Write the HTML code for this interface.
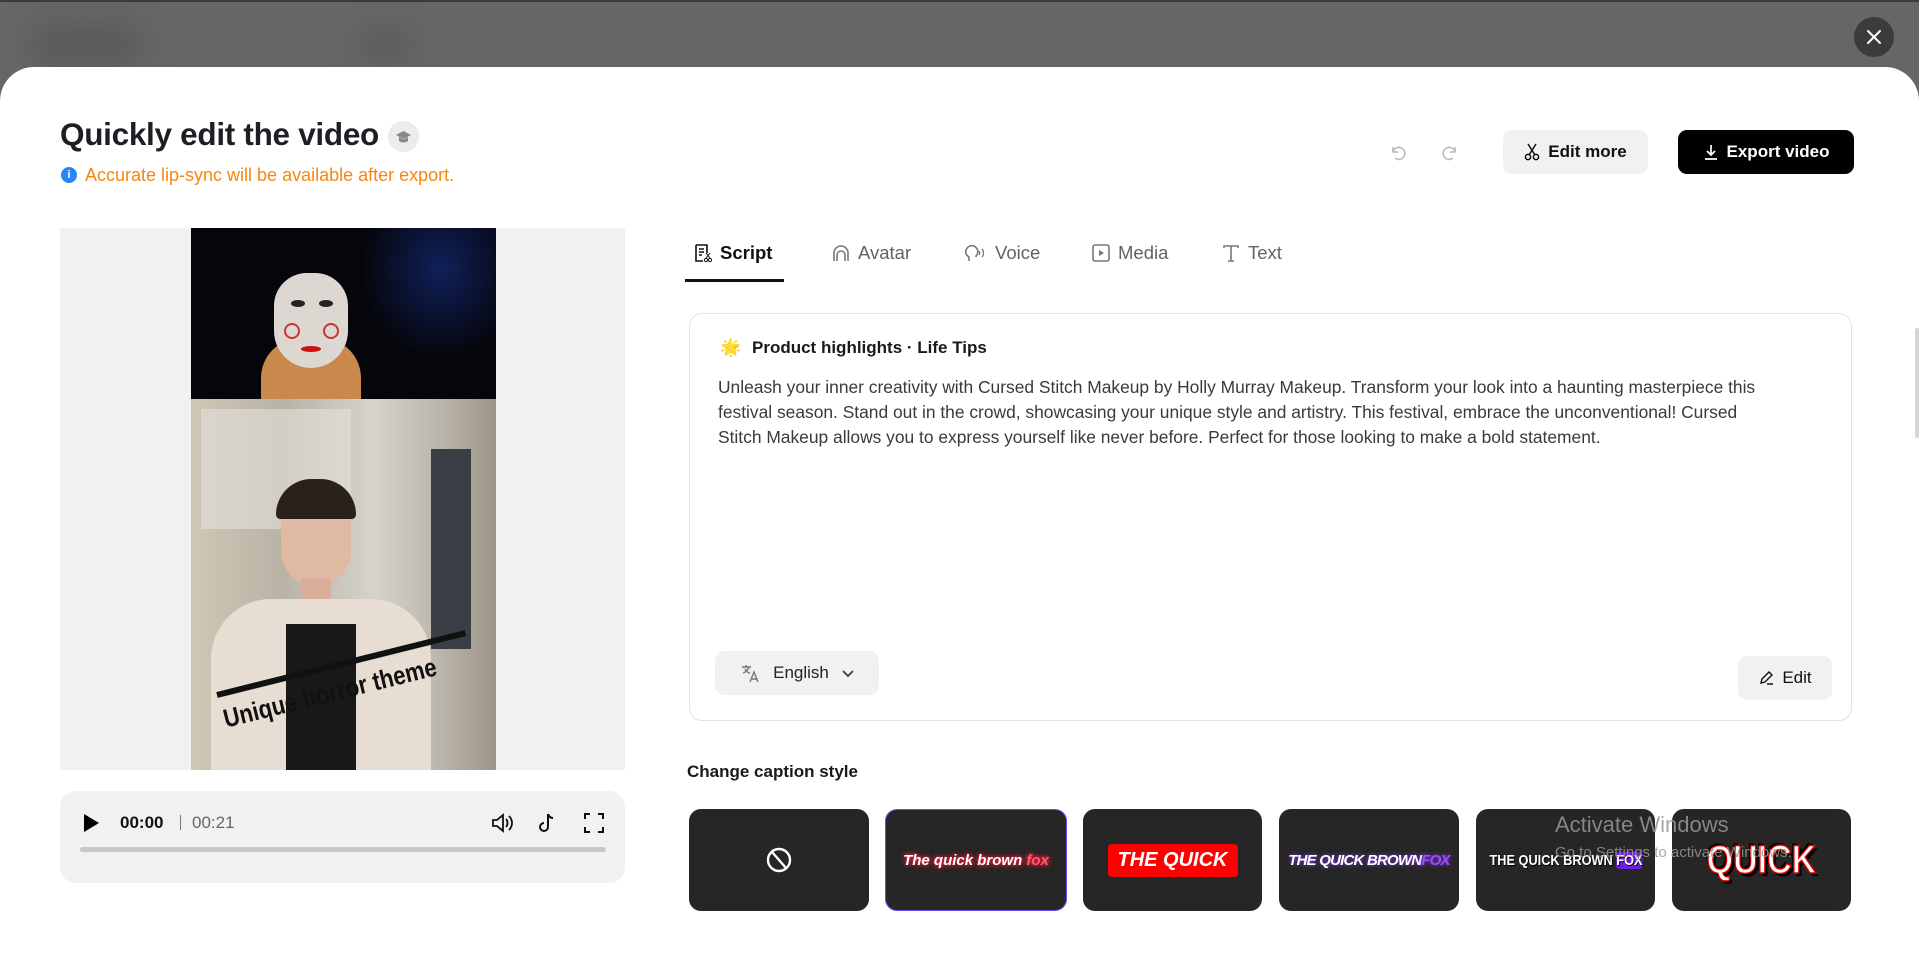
<!DOCTYPE html>
<html><head><meta charset="utf-8"><style>
*{margin:0;padding:0;box-sizing:border-box}
body{width:1919px;height:911px;overflow:hidden;background:#666;font-family:"Liberation Sans",Arial,sans-serif;position:relative;color:#1f1f1f}
.abs{position:absolute}
.topline{left:0;top:0;width:1919px;height:2px;background:#3c3c3c}
.close{left:1854px;top:17px;width:40px;height:40px;border-radius:50%;background:#3b3b3b}
.modal{left:0;top:67px;width:1919px;height:900px;background:#fff;border-radius:34px 34px 0 0}
.title{left:60px;top:116px;font-size:31.5px;font-weight:bold;color:#1c1f23;letter-spacing:-0.3px}
.cap{left:388px;top:121px;width:31px;height:31px;border-radius:50%;background:#ececec}
.info{left:61px;top:165px;font-size:18px;color:#f5870f}
.infoi{left:61px;top:167px;width:16px;height:16px;border-radius:50%;background:#2b86f5;color:#fff;font-size:11px;font-weight:bold;text-align:center;line-height:16px}
.btn{border-radius:9px;font-size:17px;font-weight:bold;display:flex;align-items:center;justify-content:center;gap:8px;white-space:nowrap}
.tab{top:242px;font-size:18.5px;color:#606366;display:flex;align-items:center;gap:7px}
.card{left:689px;top:313px;width:1163px;height:408px;border:1px solid #e4e4e4;border-radius:13px}
.body{left:718px;top:375px;font-size:17.4px;line-height:25px;color:#3a3a3a;width:1130px;white-space:nowrap}
.tile{top:809px;height:102px;border-radius:12px;background:#262626;overflow:hidden;display:flex;align-items:center;justify-content:center;white-space:nowrap}
</style></head><body>
<div class="abs topline"></div>
<div class="abs" style="left:30px;top:25px;width:110px;height:40px;background:#5a5a5a;filter:blur(14px);border-radius:20px"></div>
<div class="abs" style="left:360px;top:30px;width:50px;height:30px;background:#5c5c5c;filter:blur(12px)"></div>
<div class="abs close"><svg width="40" height="40"><path d="M14 14L26 26M26 14L14 26" stroke="#fff" stroke-width="2" stroke-linecap="round"/></svg></div>
<div class="abs modal"></div>

<div class="abs title">Quickly edit the video</div>
<div class="abs cap"><svg width="31" height="31"><path d="M8 14l7.5-4 7.5 4-7.5 4z" fill="#888"/><path d="M11 16v4c2 2 7 2 9 0v-4l-4.5 2.5z" fill="#888"/></svg></div>
<div class="abs infoi">i</div>
<div class="abs info" style="left:85px">Accurate lip-sync will be available after export.</div>

<svg class="abs" style="left:1387px;top:142px" width="22" height="22"><path d="M6 5v5h5M6 10a6 6 0 1 1 2 6" fill="none" stroke="#bbb" stroke-width="1.6"/></svg>
<svg class="abs" style="left:1439px;top:142px" width="22" height="22"><path d="M16 5v5h-5M16 10a6 6 0 1 0-2 6" fill="none" stroke="#bbb" stroke-width="1.6"/></svg>
<div class="abs btn" style="left:1503px;top:130px;width:145px;height:44px;background:#f1f1f1;color:#111"><svg width="16" height="18"><circle cx="4" cy="14" r="2.6" fill="none" stroke="#111" stroke-width="1.5"/><circle cx="12" cy="14" r="2.6" fill="none" stroke="#111" stroke-width="1.5"/><path d="M5 12L12 1M11 12L4 1" stroke="#111" stroke-width="1.5"/></svg>Edit more</div>
<div class="abs btn" style="left:1678px;top:130px;width:176px;height:44px;background:#000;color:#fff"><svg width="16" height="18"><path d="M8 2v10M4 8l4 4 4-4M2 16h12" fill="none" stroke="#fff" stroke-width="1.7"/></svg>Export video</div>

<!-- video -->
<div class="abs" style="left:60px;top:228px;width:565px;height:542px;background:#f1f1f1"></div>
<div class="abs" style="left:191px;top:228px;width:305px;height:171px;background:radial-gradient(ellipse 80px 90px at 250px 40px,#10205a 0,transparent 100%),#05060c;overflow:hidden">
<div class="abs" style="left:70px;top:110px;width:100px;height:61px;background:#c9884c;border-radius:40px 40px 0 0"></div>
<div class="abs" style="left:83px;top:45px;width:74px;height:95px;background:#dcd7d1;border-radius:40px 40px 45px 45px"></div>
<div class="abs" style="left:100px;top:72px;width:14px;height:7px;background:#222;border-radius:50%"></div>
<div class="abs" style="left:128px;top:72px;width:14px;height:7px;background:#222;border-radius:50%"></div>
<div class="abs" style="left:93px;top:95px;width:16px;height:16px;border:2px solid #c33;border-radius:50%"></div>
<div class="abs" style="left:132px;top:95px;width:16px;height:16px;border:2px solid #c33;border-radius:50%"></div>
<div class="abs" style="left:110px;top:118px;width:20px;height:6px;background:#c11;border-radius:50%"></div>
</div>
<div class="abs" style="left:191px;top:399px;width:305px;height:371px;background:linear-gradient(90deg,#cfc7b5 0,#b9b3a6 30%,#d6d3cb 60%,#bdb8ae 80%,#9c9488 100%);overflow:hidden">
<div class="abs" style="left:10px;top:10px;width:150px;height:120px;background:#e3e1da;opacity:.6"></div>
<div class="abs" style="left:240px;top:50px;width:40px;height:200px;background:#3a3e45"></div>
<div class="abs" style="left:90px;top:95px;width:70px;height:92px;background:#e0b9a3;border-radius:35px 35px 40px 40px"></div>
<div class="abs" style="left:85px;top:80px;width:80px;height:40px;background:#2a211d;border-radius:40px 40px 5px 5px"></div>
<div class="abs" style="left:110px;top:180px;width:30px;height:40px;background:#d9ae98"></div>
<div class="abs" style="left:20px;top:200px;width:220px;height:200px;background:#e7ddd3;border-radius:60px 60px 0 0"></div>
<div class="abs" style="left:95px;top:225px;width:70px;height:160px;background:#181818"></div>
</div>
<div class="abs" style="left:217px;top:692px;width:256px;height:6px;background:#111;transform:rotate(-14deg);transform-origin:left"></div>
<div class="abs" style="left:224px;top:704px;font-size:26px;font-weight:bold;color:#111;transform:rotate(-14deg) scaleX(0.85);transform-origin:left;white-space:nowrap">Unique horror theme</div>

<div class="abs" style="left:60px;top:791px;width:565px;height:92px;background:#f1f1f1;border-radius:16px"></div>
<svg class="abs" style="left:82px;top:813px" width="20" height="20"><path d="M2 1l15 9-15 9z" fill="#000"/></svg>
<div class="abs" style="left:120px;top:813px;font-size:17px;font-weight:bold;color:#111">00:00</div>
<div class="abs" style="left:180px;top:815px;width:1px;height:15px;background:#777"></div>
<div class="abs" style="left:192px;top:813px;font-size:17px;color:#666">00:21</div>
<svg class="abs" style="left:490px;top:811px" width="24" height="24"><path d="M3 9h4l6-5v16l-6-5H3z" fill="none" stroke="#111" stroke-width="1.8"/><path d="M16 8c2 2 2 6 0 8M19 5c4 4 4 10 0 14" fill="none" stroke="#111" stroke-width="1.8"/></svg>
<svg class="abs" style="left:536px;top:811px" width="24" height="24"><path d="M12 3v13a4 4 0 1 1-4-4M12 3c1 3 3 4 5 4" fill="none" stroke="#111" stroke-width="2"/></svg>
<svg class="abs" style="left:582px;top:811px" width="24" height="24"><path d="M3 8V3h5M16 3h5v5M21 16v5h-5M8 21H3v-5" fill="none" stroke="#111" stroke-width="2"/></svg>
<div class="abs" style="left:80px;top:847px;width:526px;height:5px;background:#c8c8c8;border-radius:3px"></div>

<!-- tabs -->
<div class="abs tab" style="left:693px;color:#111;font-weight:bold"><svg width="20" height="20"><path d="M3 2h11v8M3 2v16h7M6 6h5M6 9h5M6 12h3" fill="none" stroke="#111" stroke-width="1.6"/><circle cx="13" cy="17" r="1.6" fill="none" stroke="#111"/><circle cx="17" cy="17" r="1.6" fill="none" stroke="#111"/><path d="M13 15l4-5M17 15l-4-5" stroke="#111"/></svg>Script</div>
<div class="abs" style="left:685px;top:279px;width:99px;height:3px;background:#111"></div>
<div class="abs tab" style="left:831px"><svg width="20" height="20"><path d="M3 18V10a7 7 0 0 1 14 0v8M6 18v-6a4 4 0 0 1 8 0v6" fill="none" stroke="#777" stroke-width="1.6"/></svg>Avatar</div>
<div class="abs tab" style="left:964px"><svg width="24" height="20"><path d="M5 18v-4a6 6 0 1 1 7-1v1" fill="none" stroke="#777" stroke-width="1.6"/><path d="M15 8c1 1 1 3 0 4M18 6c2 2 2 6 0 8" fill="none" stroke="#777" stroke-width="1.3"/></svg>Voice</div>
<div class="abs tab" style="left:1091px"><svg width="20" height="20"><rect x="2" y="2" width="16" height="16" rx="2" fill="none" stroke="#777" stroke-width="1.6"/><path d="M8 7l5 3-5 3z" fill="#777"/></svg>Media</div>
<div class="abs tab" style="left:1221px"><svg width="20" height="20"><path d="M3 5V3h14v2M10 3v15M7 18h6" fill="none" stroke="#777" stroke-width="1.6"/></svg>Text</div>

<!-- script card -->
<div class="abs card"></div>
<div class="abs" style="left:720px;top:338px;font-size:17px">🌟</div>
<div class="abs" style="left:752px;top:338px;font-size:17px;font-weight:bold;color:#1a1a1a">Product highlights · Life Tips</div>
<div class="abs body">Unleash your inner creativity with Cursed Stitch Makeup by Holly Murray Makeup. Transform your look into a haunting masterpiece this<br>festival season. Stand out in the crowd, showcasing your unique style and artistry. This festival, embrace the unconventional! Cursed<br>Stitch Makeup allows you to express yourself like never before. Perfect for those looking to make a bold statement.</div>
<div class="abs btn" style="left:715px;top:651px;width:164px;height:44px;background:#f1f1f1;color:#222;font-weight:normal;font-size:17px;gap:12px"><svg width="22" height="22"><path d="M3 5h9M7 3v2M4 11c3-1 5-3 6-6M6 7c1 2 3 4 5 4" fill="none" stroke="#777" stroke-width="1.4"/><path d="M11 20l4-10 4 10M12.5 17h5" fill="none" stroke="#777" stroke-width="1.4"/></svg>English<svg width="14" height="14"><path d="M2 5l5 5 5-5" fill="none" stroke="#333" stroke-width="1.6"/></svg></div>
<div class="abs btn" style="left:1738px;top:656px;width:94px;height:44px;background:#f1f1f1;color:#111;font-weight:normal"><svg width="16" height="16"><path d="M3 13l1-4 7-7 3 3-7 7zM9 14h6" fill="none" stroke="#111" stroke-width="1.4"/></svg>Edit</div>

<div class="abs" style="left:687px;top:762px;font-size:17px;font-weight:bold;color:#1a1a1a">Change caption style</div>

<div class="abs tile" style="left:689px;width:180px"><svg width="28" height="28"><circle cx="14" cy="14" r="11" fill="none" stroke="#fff" stroke-width="2.4"/><path d="M7 6l14 16" stroke="#fff" stroke-width="2.4"/></svg></div>
<div class="abs tile" style="left:885px;width:182px;border:1.5px solid #6b4cf5"><span style="color:#fff;font-weight:bold;font-style:italic;font-size:15px;text-shadow:0 0 4px #ff1a3c,0 0 6px #ff1a3c">The quick brown <span style="color:#ff5a6a">fox</span></span></div>
<div class="abs tile" style="left:1083px;width:179px"><span style="background:#f00;color:#fff;font-weight:bold;font-style:italic;font-size:20px;padding:5px 10px;border-radius:4px">THE QUICK</span></div>
<div class="abs tile" style="left:1279px;width:180px"><span style="color:#fff;font-weight:bold;font-style:italic;font-size:15px;letter-spacing:-0.8px;text-shadow:0 0 4px #8a3cff">THE QUICK BROWN<span style="color:#9d4dff">FOX</span></span></div>
<div class="abs tile" style="left:1476px;width:179px"><span style="color:#fff;font-weight:bold;font-size:15px;display:inline-block;transform:scaleX(0.85);text-shadow:1px 1px 0 #000">THE QUICK BROWN <span style="background:#6a1fe0;border-radius:3px">FOX</span></span></div>
<div class="abs tile" style="left:1672px;width:179px"><span style="color:#fff;font-weight:bold;font-size:40px;display:inline-block;transform:scaleX(0.85);-webkit-text-stroke:1.5px #d00;text-shadow:3px 3px 0 #000,-2px -2px 0 #000">QUICK</span></div>

<div class="abs" style="left:1555px;top:812px;font-size:22px;color:rgba(150,150,150,.85)">Activate Windows</div>
<div class="abs" style="left:1555px;top:844px;font-size:15px;color:rgba(150,150,150,.85)">Go to Settings to activate Windows.</div>
<div class="abs" style="left:1915px;top:328px;width:4px;height:110px;background:#d6d6d6;border-radius:2px"></div>
</body></html>
